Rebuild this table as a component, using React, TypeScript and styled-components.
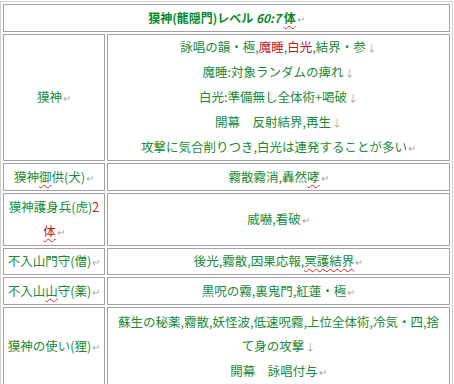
import React from "react";
import styled, { createGlobalStyle } from "styled-components";

const GlobalStyle = createGlobalStyle`
  html, body { margin: 0; padding: 0; background: #ffffff; }
  body { font-family: "Noto Sans CJK JP", "Noto Sans", sans-serif; }
`;

const Page = styled.div`
  padding-top: 1px;
  width: 454px;
  height: 384px;
  overflow: hidden;
  box-sizing: border-box;
`;

const Table = styled.table`
  border-collapse: separate;
  border-spacing: 2px;
  border: 1px solid #cfcfcf;
  width: 453px;
  table-layout: fixed;
`;

const Cell = styled.td<{ $h: number; $title?: boolean }>`
  box-sizing: border-box;
  height: ${(p) => p.$h}px;
  border: 1px solid #a3a3a3;
  padding: 0 1px;
  text-align: center;
  vertical-align: middle;
  color: ${(p) => (p.$title ? "#0a8a2c" : "#1b8a38")};
  font-family: "Noto Sans CJK JP", sans-serif;
  font-size: ${(p) => (p.$title ? 12 : 12.5)}px;
  font-weight: ${(p) => (p.$title ? 700 : 400)};
  line-height: 24px;
  white-space: nowrap;
  overflow: hidden;
`;

const Red = styled.span`
  color: #c41818;
`;

const Wavy = styled.span`
  text-decoration: underline wavy #e02020;
  text-decoration-thickness: 1px;
  text-underline-offset: 2px;
`;

const Mark = styled.span`
  color: #a8a8a8;
  font-size: 10px;
  font-weight: 400;
  margin-left: 1px;
`;

const Italic = styled.span`
  font-style: italic;
`;

const Para = () => <Mark>↵</Mark>;
const Brk = () => <Mark>↓</Mark>;

export default function App() {
  return (
    <Page>
      <GlobalStyle />
      <Table>
        <colgroup>
          <col style={{ width: 102 }} />
          <col />
        </colgroup>
        <tbody>
          <tr>
            <Cell colSpan={2} $h={28} $title>
              獏神(龍隠門)レベル <Italic>60:7</Italic> <Wavy>体</Wavy>
              <Para />
            </Cell>
          </tr>
          <tr>
            <Cell $h={124}>
              獏神
              <Para />
            </Cell>
            <Cell $h={124}>
              詠唱の韻・極,<Red>魔睡</Red>,<Red>白光</Red>,結界・参
              <Brk />
              <br />
              魔睡:対象ランダムの痺れ
              <Brk />
              <br />
              白光:準備無し全体術+喝破
              <Brk />
              <br />
              開幕　反射結界,再生
              <Brk />
              <br />
              攻撃に気合削りつき,白光は連発することが多い
              <Para />
            </Cell>
          </tr>
          <tr>
            <Cell $h={28}>
              獏神<Wavy>御</Wavy>供(犬)
              <Para />
            </Cell>
            <Cell $h={28}>
              霧散霧消,轟然<Wavy>哮</Wavy>
              <Para />
            </Cell>
          </tr>
          <tr>
            <Cell $h={53}>
              獏神護身兵(虎)<Red>2</Red>
              <br />
              <Red>
                <Wavy>体</Wavy>
              </Red>
              <Para />
            </Cell>
            <Cell $h={53}>
              威嚇,看破
              <Para />
            </Cell>
          </tr>
          <tr>
            <Cell $h={27}>
              不入山門守(僧)
              <Para />
            </Cell>
            <Cell $h={27}>
              後光,霧散,因果応報,<Wavy>冥護結界</Wavy>
              <Para />
            </Cell>
          </tr>
          <tr>
            <Cell $h={28}>
              不入山<Wavy>山</Wavy>守(薬)
              <Para />
            </Cell>
            <Cell $h={28}>
              黒呪の霧,裏鬼門,紅蓮・極
              <Para />
            </Cell>
          </tr>
          <tr>
            <Cell $h={79}>
              獏神の使い(狸)
              <Para />
            </Cell>
            <Cell $h={79}>
              蘇生の秘薬,霧散,妖怪波,低速呪霧,上位全体術,冷気・四,捨
              <br />
              て身の攻撃
              <Brk />
              <br />
              開幕　詠唱付与
              <Para />
            </Cell>
          </tr>
        </tbody>
      </Table>
    </Page>
  );
}
